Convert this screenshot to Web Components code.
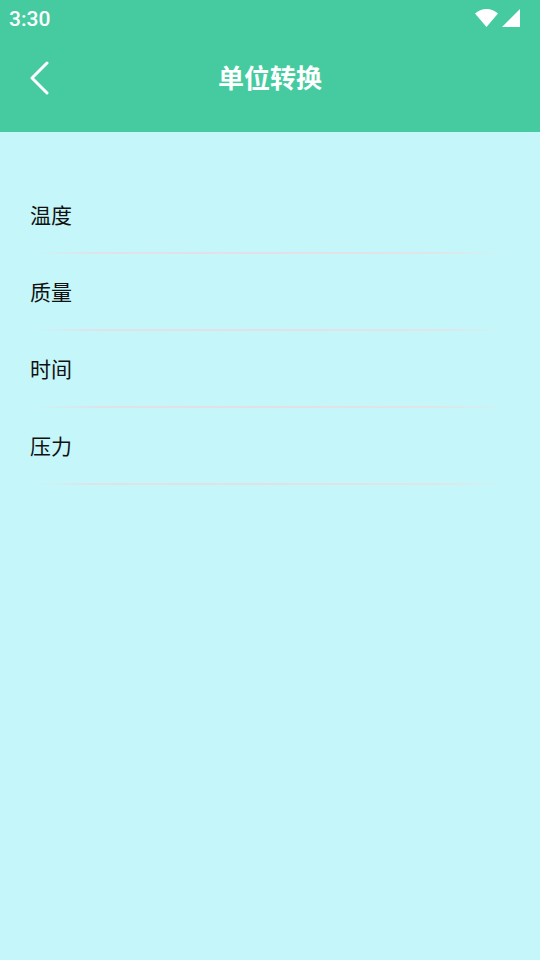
<!DOCTYPE html>
<html lang="zh">
<head>
<meta charset="utf-8">
<title>单位转换</title>
<style>
  html, body { margin: 0; height: 100%; }
  body { font-family: Roboto, "Noto Sans CJK SC", sans-serif; }
</style>
</head>
<body>
<unit-page>
  <app-header slot="header" title="单位转换" time="3:30"></app-header>
  <unit-row>温度</unit-row>
  <unit-row>质量</unit-row>
  <unit-row>时间</unit-row>
  <unit-row>压力</unit-row>
</unit-page>

<script>
// page shell
class UnitPage extends HTMLElement {
  constructor() {
    super();
    const shadow = this.attachShadow({ mode: 'open' });
    shadow.innerHTML = `
      <style>
        :host { display: flex; flex-direction: column; width: 540px; height: 960px; background: #c5f7fa; overflow: hidden; }
        .list { display: flex; flex-direction: column; padding-top: 45px; }
      </style>
      <slot name="header"></slot>
      <div class="list"><slot></slot></div>
    `;
  }
}

// green bar: status line + toolbar
class AppHeader extends HTMLElement {
  constructor() {
    super();
    const shadow = this.attachShadow({ mode: 'open' });
    shadow.innerHTML = `
      <style>
        :host { display: block; height: 132px; background: #46cba0; color: #fff; }
        .status { display: flex; align-items: center; justify-content: space-between; height: 38px; padding: 0 20px 0 9px; }
        .time { font: 500 21px/38px Roboto, sans-serif; }
        .icons { display: flex; align-items: center; gap: 4px; padding-bottom: 2px; }
        svg { display: block; }
        .bar { display: flex; align-items: center; height: 80px; padding-left: 30px; }
        h1 { flex: 1; margin: 0 0 2px -50px; text-align: center; font: 700 26px/78px "Noto Sans CJK SC", sans-serif; }
        .back { width: 20px; height: 34px; flex: none; }
      </style>
      <div class="status">
        <span class="time"></span>
        <span class="icons">
          <svg width="23" height="18" viewBox="0 0 23 18"><path d="M0 4.500C3 1.800 7 0 11.500 0S20 1.800 23 4.500L11.500 18Z" fill="#fff"/></svg>
          <svg width="18" height="18" viewBox="0 0 18 18"><path d="M18 0V18H0Z" fill="#fff"/></svg>
        </span>
      </div>
      <div class="bar">
        <svg class="back" viewBox="0 0 20 34"><path d="M17 2 2 17 17 32" fill="none" stroke="#fff" stroke-width="3" stroke-linecap="round" stroke-linejoin="round"/></svg>
        <h1></h1>
      </div>
    `;
    shadow.querySelector('.time').textContent = this.getAttribute('time');
    shadow.querySelector('h1').textContent = this.getAttribute('title');
  }
}

// one line of the list, divider fades out at both ends
class UnitRow extends HTMLElement {
  constructor() {
    super();
    const shadow = this.attachShadow({ mode: 'open' });
    shadow.innerHTML = `
      <style>
        :host { display: block; padding: 0 30px; color: #111; }
        .label { height: 73px; padding-bottom: 2px; display: flex; align-items: center; font: 400 21px/30px "Noto Sans CJK SC", sans-serif; }
        .line { height: 2px; background: linear-gradient(90deg, rgba(226,226,232,0), #e0e2e8 14%, #e4dfe6 50%, #dfe6e8 86%, rgba(226,226,232,0)); }
      </style>
      <div class="label"><slot></slot></div>
      <div class="line"></div>
    `;
  }
}

customElements.define('unit-page', UnitPage);
customElements.define('app-header', AppHeader);
customElements.define('unit-row', UnitRow);
</script>
</body>
</html>
